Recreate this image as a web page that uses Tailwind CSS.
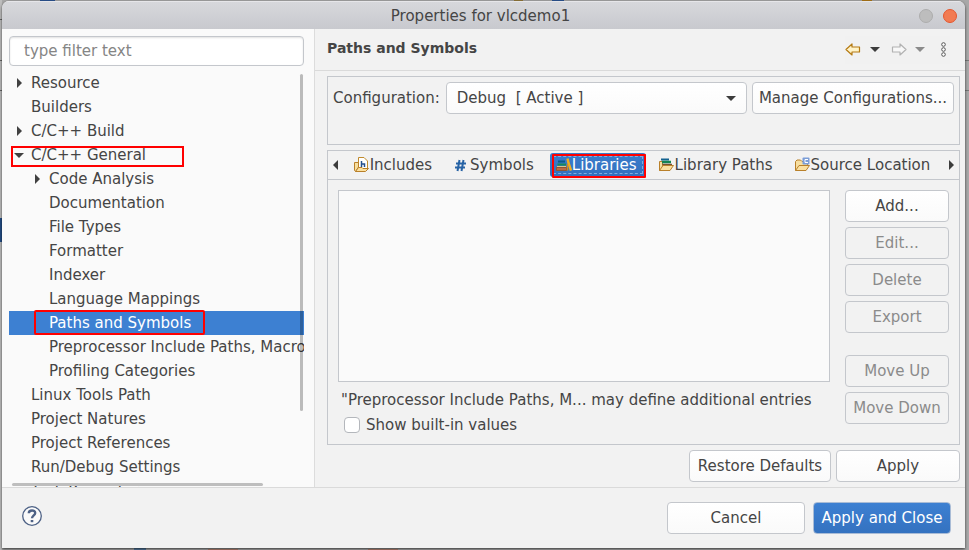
<!DOCTYPE html>
<html lang="en">
<head>
<meta charset="utf-8">
<title>Properties for vlcdemo1</title>
<script src="https://cdn.jsdelivr.net/npm/@tailwindcss/browser@4"></script>
</head>
<body class="relative h-screen min-h-[550px] overflow-hidden bg-[#a8a8a8] font-['DejaVu_Sans',sans-serif] text-[15px] leading-6 text-[#454545]">
<!-- Parts of the workspace that show round the dialog -->
<div class="absolute inset-0" aria-hidden="true">
  <div class="absolute top-0 left-0 h-full w-[2px] bg-[#bdbdbd]"></div>
  <div class="absolute top-[19px] left-0 h-[1px] w-[2px] bg-[#666]"></div>
  <div class="absolute top-[60px] left-0 h-[1px] w-[2px] bg-[#666]"></div>
  <div class="absolute top-[90px] left-0 h-[1px] w-[2px] bg-[#666]"></div>
  <div class="absolute top-[218px] left-0 h-[24px] w-[2px] bg-[#234d86]"></div>
  <div class="absolute top-0 left-[40px] h-[1px] w-[15px] bg-[#2c5594]"></div>
  <div class="absolute top-0 left-[552px] h-[1px] w-[12px] bg-[#2c5594]"></div>
  <div class="absolute top-0 left-[514px] h-[1px] w-[9px] bg-[#94793b]"></div>
  <div class="absolute top-0 left-[862px] h-[1px] w-[10px] bg-[#b07818]"></div>
  <div class="absolute top-[60px] right-0 h-[1px] w-[4px] bg-[#777]"></div>
  <div class="absolute top-[90px] right-0 h-[1px] w-[4px] bg-[#777]"></div>
  <div class="absolute bottom-0 left-[134px] h-[2px] w-[12px] bg-[#55799f]"></div>
  <div class="absolute bottom-0 left-[208px] h-[1px] w-[30px] bg-[#b88272]"></div>
  <div class="absolute bottom-0 left-[368px] h-[1px] w-[30px] bg-[#b88272]"></div>
</div>

<div class="relative flex h-full flex-col pt-px pr-[4px] pb-[2px] pl-[2px]">
<div class="flex min-h-0 flex-1 flex-col overflow-hidden rounded-t-[7px] bg-[#f2f2f2] shadow-[0_1px_3px_rgba(0,0,0,0.7)]">

  <header class="flex h-7 shrink-0 items-center border-t border-[#e6e6e9] bg-linear-to-b from-[#d7d8dc] to-[#c8c9ce] pr-2 pl-10">
    <h1 class="flex-1 text-center">Properties for vlcdemo1</h1>
    <div class="flex gap-[10px]">
      <button aria-label="Minimize" class="size-[14px] rounded-full border border-[#adadad] bg-[#bdbdbd]"></button>
      <button aria-label="Close" class="size-[14px] rounded-full border border-[#e4572f] bg-[#f27b52]"></button>
    </div>
  </header>

  <div class="flex min-h-0 flex-1">
    <nav aria-label="Property pages" class="flex w-[313px] shrink-0 flex-col border-r border-[#dcdcdc] bg-[#fafafa] pt-[7px] pr-[10px] pl-[7px]">
      <input type="text" aria-label="Filter" placeholder="type filter text" class="mb-[5px] h-[30px] w-full shrink-0 rounded-[4px] border border-[#c4c7cc] bg-white px-[14px] shadow-[inset_0_1px_2px_rgba(0,0,0,0.12)] placeholder:text-[#858585]">
      <div class="relative min-h-0 flex-1 overflow-hidden">
        <ul class="whitespace-nowrap">
          <li class="flex items-center pl-[7px]"><svg class="mr-[9px] h-[10px] w-[6px] shrink-0" viewBox="0 0 6 10"><path d="M1 0L6 5L1 10Z" fill="#414141"/></svg>Resource</li>
          <li class="pl-[22px]">Builders</li>
          <li class="flex items-center pl-[7px]"><svg class="mr-[9px] h-[10px] w-[6px] shrink-0" viewBox="0 0 6 10"><path d="M1 0L6 5L1 10Z" fill="#414141"/></svg>C/C++ Build</li>
          <li class="relative flex items-center pl-[5px]"><svg class="mr-[7px] h-[5px] w-[10px] shrink-0" viewBox="0 0 10 5"><path d="M0 0H10L5 5Z" fill="#414141"/></svg>C/C++ General<span class="absolute top-[3px] left-[2px] h-[21px] w-[173px] border-2 border-[#f00]"></span></li>
          <li class="flex items-center pl-[25px]"><svg class="mr-[9px] h-[10px] w-[6px] shrink-0" viewBox="0 0 6 10"><path d="M1 0L6 5L1 10Z" fill="#414141"/></svg>Code Analysis</li>
          <li class="pl-10">Documentation</li>
          <li class="pl-10">File Types</li>
          <li class="pl-10">Formatter</li>
          <li class="pl-10">Indexer</li>
          <li class="pl-10">Language Mappings</li>
          <li class="relative bg-[#3d80d2] pl-10 text-white" aria-current="page">Paths and Symbols<span class="absolute -top-px left-[25px] h-[25px] w-[171px] rounded-[2px] border-2 border-[#f00]"></span></li>
          <li class="pl-10">Preprocessor Include Paths, Macros</li>
          <li class="pl-10">Profiling Categories</li>
          <li class="pl-[22px]">Linux Tools Path</li>
          <li class="pl-[22px]">Project Natures</li>
          <li class="pl-[22px]">Project References</li>
          <li class="pl-[22px]">Run/Debug Settings</li>
          <li class="pl-[22px]">Task Repository</li>
        </ul>
        <span class="absolute top-[3px] right-px h-[337px] w-[3px] rounded-full bg-black/25"></span>
        <span class="absolute bottom-px left-[3px] h-[3px] w-[251px] rounded-full bg-[#bebebe]"></span>
      </div>
    </nav>

    <main class="flex min-w-0 flex-1 flex-col">
      <div class="flex h-[42px] shrink-0 items-center justify-between border-b border-[#dadada] pr-[15px] pl-3">
        <h2 class="pb-1 text-[14px] font-bold">Paths and Symbols</h2>
        <div class="flex h-7 items-center bg-[#f1f1f1] pr-1">
          <button aria-label="Back" class="mr-[9px]"><svg class="h-[13px] w-4" viewBox="0 0 16 13"><path d="M1 6.500L7 1V4H14.500V9H7V12Z" fill="#fff3c8" stroke="#b57a12" stroke-width="1.200" stroke-linejoin="round"/></svg></button>
          <button aria-label="Back history" class="mr-[11px]"><svg class="h-[5px] w-[10px]" viewBox="0 0 10 5"><path d="M0 0H10L5 5Z" fill="#3c3c3c"/></svg></button>
          <button aria-label="Forward" disabled class="mr-[8px]"><svg class="h-[13px] w-4" viewBox="0 0 16 13"><path d="M15 6.500L9 1V4H1.500V9H9V12Z" fill="#f8f8f8" stroke="#b2b2b2" stroke-width="1.200" stroke-linejoin="round"/></svg></button>
          <button aria-label="Forward history" disabled class="mr-4"><svg class="h-[5px] w-[10px]" viewBox="0 0 10 5"><path d="M0 0H10L5 5Z" fill="#8b8b8b"/></svg></button>
          <button aria-label="View menu"><svg class="h-[15px] w-[5px]" viewBox="0 0 5 15" fill="#fff" stroke="#555" stroke-width="1"><circle cx="2.500" cy="2.500" r="1.800"/><circle cx="2.500" cy="7.500" r="1.800"/><circle cx="2.500" cy="12.500" r="1.800"/></svg></button>
        </div>
      </div>

      <div class="flex min-h-0 flex-1 flex-col gap-[5px] pt-[5px] pr-[5px] pb-[5px] pl-3">
        <section class="flex h-[69px] shrink-0 items-start gap-[5px] border border-[#c4c7cc] p-[5px]">
          <label for="config" class="mr-px leading-8">Configuration:</label>
          <div class="relative min-w-0 flex-1">
            <select id="config" class="h-8 w-full appearance-none rounded-[4px] border border-[#c4c7cc] bg-linear-to-b from-white to-[#fafafa] px-[10px]"><option>Debug&nbsp; [ Active ]</option></select>
            <svg class="pointer-events-none absolute top-[14px] right-[11px] h-[5px] w-[10px]" viewBox="0 0 10 5"><path d="M0 0H10L5 5Z" fill="#3c3c3c"/></svg>
          </div>
          <button class="h-8 w-[202px] shrink-0 rounded-[4px] border border-[#c4c7cc] bg-linear-to-b from-white to-[#fafafa] whitespace-nowrap">Manage Configurations...</button>
        </section>

        <section class="flex min-h-0 flex-1 flex-col border border-[#c4c7cc]">
          <div class="flex h-[29px] shrink-0 items-center justify-between border-b border-[#c4c7cc] px-[5px]">
            <button aria-label="Scroll tabs left"><svg class="h-[10px] w-[5px]" viewBox="0 0 5 10"><path d="M5 0V10L0 5Z" fill="#3c3c3c"/></svg></button>
            <div role="tablist" class="flex h-6 gap-[7px] whitespace-nowrap">
              <button role="tab" class="flex items-center pr-[9px] pl-[6px]"><svg class="size-4" viewBox="0 0 16 16"><path d="M4.500 0.500H10L13.500 4V11.500H4.500Z" fill="#fff" stroke="#c08a2c"/><path d="M0.500 5.500H4.500V10L1.500 14.500L0.500 13.500Z" fill="#f7dfa0" stroke="#b9802a"/><path d="M7.500 4V10M7.500 7H10.500V10" fill="none" stroke="#24508f" stroke-width="1.500"/><path d="M1.500 14.500L4.500 10.500H8L9 11.500H14.500L11.500 14.500Z" fill="#fbe0a0" stroke="#b9802a"/></svg>Includes</button>
              <button role="tab" class="flex items-center pr-[9px] pl-[6px]"><svg class="size-4" viewBox="0 0 16 16"><path d="M5.500 3L3.500 14M9.500 3L7.500 14M2 6.500H12M1 10.500H11" fill="none" stroke="#2763a5" stroke-width="2"/></svg>Symbols</button>
              <button role="tab" aria-selected="true" class="relative flex items-center rounded-[3px] bg-linear-to-b from-[#3b7ccb] to-[#3270bf] pr-[9px] pl-[6px] text-white"><svg class="size-4" viewBox="0 0 16 16"><path d="M2 4.500H9" stroke="#0b5b8c" stroke-width="2"/><path d="M1.500 7.500H10" stroke="#178a5b" stroke-width="2"/><path d="M1 9.500H10" stroke="#d8c58c"/><path d="M0.500 10.500H10.500V13.500H0.500Z" fill="#b86b45" stroke="#8d5637"/><path d="M11.500 1.500L12.500 6L15 13.500" fill="none" stroke="#efac20" stroke-width="2.500"/><path d="M11.500 7V13.500" stroke="#d08a20" stroke-width="1.500"/></svg>Libraries<span class="absolute inset-[3px] border border-dashed border-[#82acdf]"></span><span class="absolute top-px right-0 -bottom-px left-[2px] rounded-[1px] border-2 border-[#f00]"></span></button>
              <button role="tab" class="flex items-center pr-[9px] pl-[6px]"><svg class="size-4" viewBox="0 0 16 16"><path d="M0.500 4.500H3.500V13.500H0.500Z" fill="#f7dfa0" stroke="#b9802a"/><path d="M2 2.500H10" stroke="#14628f" stroke-width="2"/><path d="M3 5H12" stroke="#138454" stroke-width="2.500"/><path d="M3.500 7.500H13" stroke="#765335" stroke-width="1.500"/><path d="M0.500 13.500L4 8.500H14.500L11 13.500Z" fill="#fbe0a0" stroke="#b9802a"/></svg>Library Paths</button>
              <button role="tab" class="flex items-center pr-[9px] pl-[6px]"><svg class="size-4" viewBox="0 0 16 16"><path d="M0.500 13.500V4.500L2 3H5.500L7 4.500H12.500V9" fill="#f7dfa0" stroke="#b9802a"/><rect x="7.500" y="0.500" width="7" height="7" rx="1" fill="#7c9ed8"/><path d="M13 2.500H10V5.500H13" fill="none" stroke="#fff"/><path d="M0.500 13.500L4 8.500H14.500L11 13.500Z" fill="#fbe0a0" stroke="#b9802a"/></svg>Source Location</button>
            </div>
            <button aria-label="Scroll tabs right"><svg class="h-[10px] w-[5px]" viewBox="0 0 5 10"><path d="M0 0V10L5 5Z" fill="#3c3c3c"/></svg></button>
          </div>
          <div class="flex min-h-0 flex-1 gap-[15px] px-[10px] pt-[10px]">
            <div class="flex min-w-0 flex-1 flex-col">
              <div role="listbox" aria-label="Libraries" class="h-[192px] border border-[#c4c7cc] bg-[#fafafa]"></div>
              <p class="mt-[6px] pl-[3px] whitespace-nowrap">"Preprocessor Include Paths, M... may define additional entries</p>
              <label class="flex items-center gap-[6px] pt-px pl-[6px]"><input type="checkbox" class="size-4 appearance-none rounded-[4px] border border-[#b4b7bc] bg-white">Show built-in values</label>
            </div>
            <div class="flex w-[104px] shrink-0 flex-col gap-[5px] whitespace-nowrap">
              <button class="h-8 rounded-[4px] border border-[#c4c7cc] bg-linear-to-b from-white to-[#fafafa]">Add...</button>
              <button disabled class="h-8 rounded-[4px] border border-[#c4c7cc] text-[#8b8b8b]">Edit...</button>
              <button disabled class="h-8 rounded-[4px] border border-[#c4c7cc] text-[#8b8b8b]">Delete</button>
              <button disabled class="h-8 rounded-[4px] border border-[#c4c7cc] text-[#8b8b8b]">Export</button>
              <button disabled class="mt-[17px] h-8 rounded-[4px] border border-[#c4c7cc] text-[#8b8b8b]">Move Up</button>
              <button disabled class="h-8 rounded-[4px] border border-[#c4c7cc] text-[#8b8b8b]">Move Down</button>
            </div>
          </div>
        </section>

        <div class="flex shrink-0 justify-end gap-[5px]">
          <button class="h-8 w-[142px] rounded-[4px] border border-[#c4c7cc] bg-linear-to-b from-white to-[#fafafa]">Restore Defaults</button>
          <button class="h-8 w-[124px] rounded-[4px] border border-[#c4c7cc] bg-linear-to-b from-white to-[#fafafa]">Apply</button>
        </div>
      </div>
    </main>
  </div>

  <footer class="flex h-[61px] shrink-0 items-center justify-between border-t border-[#dadada] pr-[14px] pl-5">
    <button aria-label="Help" class="mb-1 size-5"><svg class="size-5" viewBox="0 0 20 20" fill="none" stroke="#4e6286"><circle cx="10" cy="10" r="9.300" fill="#fafafa" stroke-width="1.300"/><path d="M6.800 7.200C6.800 3.600 13.200 3.600 13.200 7C13.200 9.300 10 9.500 10 12.300" stroke-width="2.400"/><path d="M10 14V16.200" stroke-width="2.600"/></svg></button>
    <div class="flex gap-2">
      <button class="h-8 w-[138px] rounded-[4px] border border-[#c4c7cc] bg-linear-to-b from-white to-[#fafafa]">Cancel</button>
      <button class="h-8 w-[138px] rounded-[4px] border border-[#a9bcd6] bg-linear-to-b from-[#3d80d2] to-[#3472c0] text-white">Apply and Close</button>
    </div>
  </footer>
</div>
</div>
</body>
</html>
